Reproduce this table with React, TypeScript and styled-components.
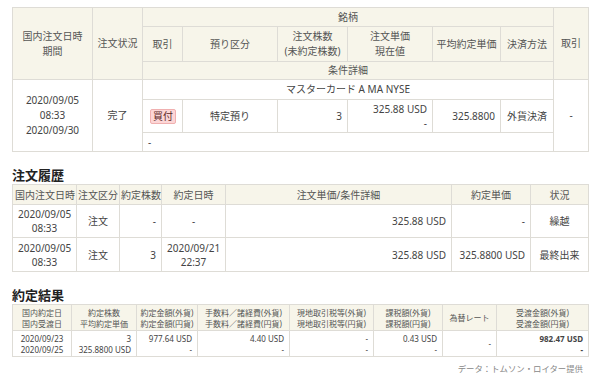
import React from "react";
import styled, { createGlobalStyle } from "styled-components";

const GlobalStyle = createGlobalStyle`
  body {
    margin: 0;
    background: #fff;
    font-family: "Noto Sans", "Noto Sans CJK JP", sans-serif;
    color: #444;
  }
`;

const Page = styled.div`
  width: 576px;
  padding: 7px 12px 0;
`;

const Table = styled.table<{ $fs?: number; $lh?: number }>`
  width: 576px;
  border-collapse: collapse;
  table-layout: fixed;
  font-size: ${(p) => p.$fs ?? 10}px;
  line-height: ${(p) => p.$lh ?? 15}px;
`;

const Row = styled.tr<{ $h: number }>`
  height: ${(p) => p.$h}px;
`;

const Th = styled.th<{ $align?: string; $pad?: number }>`
  background: #f7f5ea;
  border: 1px solid #dedcd6;
  font-weight: normal;
  color: #555;
  text-align: ${(p) => p.$align ?? "center"};
  vertical-align: middle;
  padding: 0 ${(p) => p.$pad ?? 3}px;
  white-space: nowrap;
`;

const Td = styled.td<{ $align?: string; $valign?: string; $bold?: boolean }>`
  border: 1px solid #dedcd6;
  color: #444;
  text-align: ${(p) => p.$align ?? "center"};
  vertical-align: ${(p) => p.$valign ?? "middle"};
  padding: 0 5px;
  font-weight: ${(p) => (p.$bold ? 700 : 400)};
  white-space: nowrap;
`;

const Badge = styled.span`
  display: inline-block;
  padding: 0 2px;
  line-height: 13px;
  background: #fcd6d6;
  border: 1px solid #f0b0b0;
  border-radius: 2px;
  color: #5a2626;
`;

const Title = styled.h2`
  margin: 15px 0 1px;
  font-size: 13px;
  line-height: 16px;
  font-weight: 700;
  color: #222;
`;

const Note = styled.div`
  margin-top: 6px;
  padding-right: 5px;
  text-align: right;
  font-size: 8.4px;
  line-height: 12px;
  color: #888;
`;

const Cols = ({ w }: { w: number[] }) => (
  <colgroup>
    {w.map((x, i) => (
      <col key={i} style={{ width: x }} />
    ))}
  </colgroup>
);

export default function App() {
  return (
    <Page>
      <GlobalStyle />
      <Table>
        <Cols w={[80, 50, 40, 95, 70, 85, 68, 53, 35]} />
        <thead>
          <Row $h={19}>
            <Th rowSpan={3}>
              国内注文日時
              <br />
              期間
            </Th>
            <Th rowSpan={3}>注文状況</Th>
            <Th colSpan={6}>銘柄</Th>
            <Th rowSpan={3}>取引</Th>
          </Row>
          <Row $h={35}>
            <Th>取引</Th>
            <Th>預り区分</Th>
            <Th>
              注文株数
              <br />
              (未約定株数)
            </Th>
            <Th>
              注文単価
              <br />
              現在値
            </Th>
            <Th>平均約定単価</Th>
            <Th>決済方法</Th>
          </Row>
          <Row $h={18}>
            <Th colSpan={6}>条件詳細</Th>
          </Row>
        </thead>
        <tbody>
          <Row $h={20}>
            <Td rowSpan={3}>
              2020/09/05
              <br />
              08:33
              <br />
              2020/09/30
            </Td>
            <Td rowSpan={3}>完了</Td>
            <Td colSpan={6}>マスターカード A MA NYSE</Td>
            <Td rowSpan={3}>-</Td>
          </Row>
          <Row $h={33}>
            <Td $align="left" style={{ paddingLeft: 7 }}>
              <Badge>買付</Badge>
            </Td>
            <Td>特定預り</Td>
            <Td $align="right">3</Td>
            <Td $align="right" style={{ lineHeight: "14px" }}>
              325.88 USD
              <br />-
            </Td>
            <Td $align="right">325.8800</Td>
            <Td>外貨決済</Td>
          </Row>
          <Row $h={19}>
            <Td colSpan={6} $align="left">
              -
            </Td>
          </Row>
        </tbody>
      </Table>

      <Title>注文履歴</Title>
      <Table $lh={14}>
        <Cols w={[64, 43, 42, 64, 226, 79, 58]} />
        <thead>
          <Row $h={20}>
            <Th $pad={2}>国内注文日時</Th>
            <Th $pad={1}>注文区分</Th>
            <Th $pad={1}>約定株数</Th>
            <Th>約定日時</Th>
            <Th>注文単価/条件詳細</Th>
            <Th>約定単価</Th>
            <Th>状況</Th>
          </Row>
        </thead>
        <tbody>
          <Row $h={33}>
            <Td>
              2020/09/05
              <br />
              08:33
            </Td>
            <Td>注文</Td>
            <Td $align="right">-</Td>
            <Td>-</Td>
            <Td $align="right">325.88 USD</Td>
            <Td $align="right">-</Td>
            <Td>繰越</Td>
          </Row>
          <Row $h={34}>
            <Td>
              2020/09/05
              <br />
              08:33
            </Td>
            <Td>注文</Td>
            <Td $align="right">3</Td>
            <Td>
              2020/09/21
              <br />
              22:37
            </Td>
            <Td $align="right">325.88 USD</Td>
            <Td $align="right">325.8800 USD</Td>
            <Td>最終出来</Td>
          </Row>
        </tbody>
      </Table>

      <Title>約定結果</Title>
      <Table $fs={8} $lh={11}>
        <Cols w={[59, 65, 61, 92, 84, 69, 54, 92]} />
        <thead>
          <Row $h={26}>
            <Th>
              国内約定日
              <br />
              国内受渡日
            </Th>
            <Th>
              約定株数
              <br />
              平均約定単価
            </Th>
            <Th $pad={1}>
              約定金額(外貨)
              <br />
              約定金額(円貨)
            </Th>
            <Th>
              手数料／諸経費(外貨)
              <br />
              手数料／諸経費(円貨)
            </Th>
            <Th $pad={1}>
              現地取引税等(外貨)
              <br />
              現地取引税等(円貨)
            </Th>
            <Th>
              課税額(外貨)
              <br />
              課税額(円貨)
            </Th>
            <Th>為替レート</Th>
            <Th>
              受渡金額(外貨)
              <br />
              受渡金額(円貨)
            </Th>
          </Row>
        </thead>
        <tbody>
          <Row $h={26}>
            <Td>
              2020/09/23
              <br />
              2020/09/25
            </Td>
            <Td $align="right">
              3
              <br />
              325.8800 USD
            </Td>
            <Td $align="right">
              977.64 USD
              <br />-
            </Td>
            <Td $align="right">
              4.40 USD
              <br />-
            </Td>
            <Td $align="right">
              -
              <br />-
            </Td>
            <Td $align="right">
              0.43 USD
              <br />-
            </Td>
            <Td $align="right">-</Td>
            <Td $align="right" $bold>
              982.47 USD
              <br />-
            </Td>
          </Row>
        </tbody>
      </Table>
      <Note>データ：トムソン・ロイター提供</Note>
    </Page>
  );
}
